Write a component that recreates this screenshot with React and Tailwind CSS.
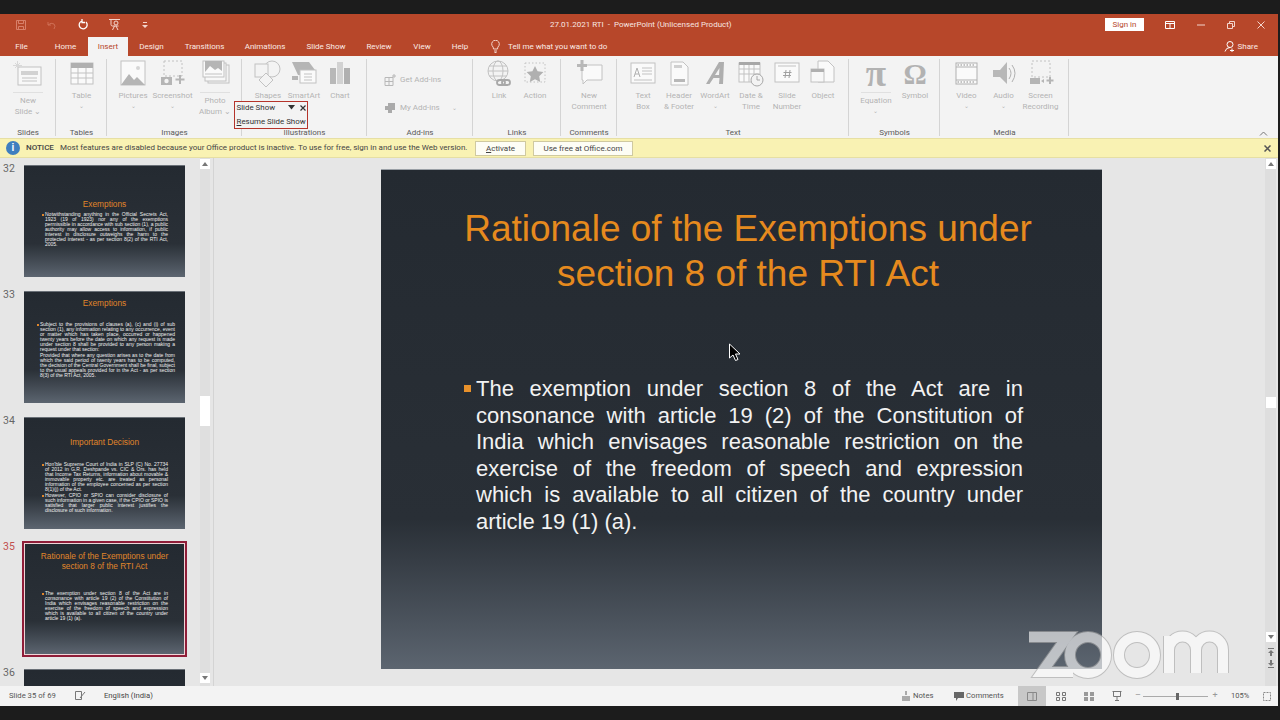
import React from "react";

const ui = { fontFamily: 'Roboto, "Noto Sans", sans-serif' };
const arial = { fontFamily: '"Liberation Sans", Arial, sans-serif' };
const serif = { fontFamily: '"Liberation Serif", serif' };

// generic ribbon icon wrapper
function Ico({ w = 30, h = 28, children }) {
  return (
    <svg width={w} height={h} viewBox={`0 0 ${w} ${h}`} fill="none" stroke="#c2c2c2" strokeWidth="1">
      {children}
    </svg>
  );
}

const icons = {
  newSlide: (
    <Ico w={32}>
      <rect x="6" y="7" width="23" height="18" fill="#f8f8f8" />
      <rect x="9" y="11" width="17" height="4" fill="#d2d2d2" stroke="none" />
      <path d="M10 18h15M10 21h15" />
      <path d="M3 3l5 5M8 3L3 8M5.500 1v9M1 5.500h9" stroke="#d8d8d8" />
    </Ico>
  ),
  table: (
    <Ico>
      <rect x="4" y="3" width="22" height="21" fill="#fafafa" />
      <rect x="4" y="3" width="22" height="5" fill="#b0b0b0" stroke="none" />
      <path d="M4 13h22M4 18h22M11 8v16M19 8v16" />
    </Ico>
  ),
  pictures: (
    <Ico>
      <rect x="3" y="1" width="24" height="24" fill="#fafafa" />
      <path d="M3 25l8-11 5 6 3-3 8 8z" fill="#b5b5b5" stroke="none" />
      <circle cx="20" cy="8" r="2" fill="#d5d5d5" stroke="none" />
    </Ico>
  ),
  screenshot: (
    <Ico>
      <rect x="6" y="1" width="18" height="15" strokeDasharray="2 2" />
      <rect x="3" y="17" width="11" height="8" fill="#b5b5b5" stroke="none" />
      <circle cx="8.500" cy="21" r="2.200" fill="#f3f3f3" stroke="none" />
      <path d="M22 15v9M17.500 19.500h9" stroke="#b5b5b5" strokeWidth="2" />
    </Ico>
  ),
  album: (
    <Ico>
      <rect x="8" y="5" width="21" height="18" fill="#f3f3f3" />
      <rect x="5" y="3" width="21" height="18" fill="#f8f8f8" />
      <rect x="3" y="1" width="21" height="16" fill="#fafafa" />
      <path d="M5 12l5-6 5 4 3-2 4 3v-10H5z" fill="#b5b5b5" stroke="none" />
      <path d="M5 14h17" />
    </Ico>
  ),
  shapes: (
    <Ico w={28}>
      <circle cx="18" cy="9" r="8" />
      <rect x="1" y="4" width="13" height="13" fill="#f3f3f3" />
      <path d="M12 13l7 7-7 7-7-7z" fill="#f3f3f3" />
    </Ico>
  ),
  smartArt: (
    <Ico>
      <path d="M3 2h17l6 8H16l-3 5H9z" fill="#b5b5b5" stroke="none" />
      <rect x="11" y="10" width="16" height="13" fill="#fafafa" />
      <path d="M15 14h8M15 17h8M15 20h8" />
      <path d="M3 16h6v4H3z" fill="#b5b5b5" stroke="none" />
    </Ico>
  ),
  chart: (
    <Ico>
      <rect x="5" y="8" width="6" height="16" fill="#b8b8b8" stroke="none" />
      <rect x="12" y="2" width="6" height="22" fill="#d2d2d2" stroke="none" />
      <rect x="19" y="8" width="6" height="16" fill="#b0b0b0" stroke="none" />
    </Ico>
  ),
  link: (
    <Ico>
      <circle cx="14" cy="11" r="10" />
      <ellipse cx="14" cy="11" rx="5" ry="10" />
      <path d="M4 11h20M5 6h18M5 16h18" />
      <rect x="13" y="20" width="8" height="5" rx="2.500" stroke="#a8a8a8" strokeWidth="1.800" />
      <rect x="18" y="20" width="8" height="5" rx="2.500" stroke="#a8a8a8" strokeWidth="1.800" />
    </Ico>
  ),
  action: (
    <Ico>
      <rect x="5" y="3" width="20" height="19" strokeDasharray="1.500 2" />
      <path d="M15 6l2.600 5.300 5.800.8-4.200 4.100 1 5.800-5.200-2.700-5.200 2.700 1-5.800-4.200-4.100 5.800-.8z" fill="#b0b0b0" stroke="none" />
    </Ico>
  ),
  comment: (
    <Ico>
      <path d="M8 5h20v15H13l-4 4v-4H8z" fill="#fafafa" />
      <path d="M8 0v11M3 5.500h10" stroke="#b8b8b8" strokeWidth="3" />
    </Ico>
  ),
  textBox: (
    <Ico>
      <rect x="3" y="3" width="24" height="20" fill="#fafafa" />
      <path d="M6 17l3-9 3 9M7 14h4" stroke="#b0b0b0" />
      <path d="M14 8h10M14 11h10M14 14h10M6 20h18" />
    </Ico>
  ),
  header: (
    <Ico>
      <path d="M7 2h12l5 5v18H7z" fill="#fafafa" />
      <rect x="10" y="5" width="8" height="3" fill="#d0d0d0" stroke="none" />
      <rect x="10" y="19" width="11" height="3" fill="#b8b8b8" stroke="none" />
    </Ico>
  ),
  wordArt: (
    <Ico>
      <path d="M6 24L19 2h5l-1 22h-4l.5-6h-6l-4 6zM15 15h4l.5-7z" fill="#aeaeae" stroke="none" />
    </Ico>
  ),
  date: (
    <Ico>
      <rect x="3" y="3" width="21" height="19" fill="#fafafa" />
      <rect x="3" y="2" width="21" height="3" fill="#a8a8a8" stroke="none" />
      <path d="M3 9h21M3 14h21M8 5v17M13 5v17M18 5v17" />
      <circle cx="21" cy="20" r="6" fill="#f3f3f3" stroke="#a8a8a8" />
      <path d="M21 16v4h3" stroke="#a8a8a8" />
    </Ico>
  ),
  number: (
    <Ico>
      <rect x="3" y="3" width="24" height="19" fill="#fafafa" />
      <path d="M6 6h18" />
      <path d="M13 18l1-8M17 18l1-8M11.500 12.500h8M11 15.500h8" stroke="#a0a0a0" />
    </Ico>
  ),
  object: (
    <Ico>
      <path d="M10 1h10l6 6v15H10z" fill="#fafafa" />
      <rect x="3" y="9" width="13" height="13" fill="#f8f8f8" />
      <rect x="3" y="9" width="13" height="3" fill="#b0b0b0" stroke="none" />
    </Ico>
  ),
  video: (
    <Ico>
      <rect x="4" y="3" width="21" height="21" fill="#fafafa" stroke="#b0b0b0" />
      <path d="M4 7h21M4 20h21" stroke="#b0b0b0" />
      <path d="M5.500 5h18M5.500 22h18" stroke="#b0b0b0" strokeWidth="1.500" strokeDasharray="1.500 1.500" />
    </Ico>
  ),
  audio: (
    <Ico>
      <path d="M4 10h7l7-8v22l-7-7H4z" fill="#b8b8b8" stroke="none" />
      <path d="M20 8q4 5 0 11M23 5q6 8 0 17" stroke="#b0b0b0" />
    </Ico>
  ),
  screenRec: (
    <Ico>
      <rect x="6" y="1" width="18" height="16" strokeDasharray="2 2" />
      <rect x="4" y="18" width="10" height="6" fill="#b5b5b5" stroke="none" />
      <path d="M15 21l3-2v4z" fill="#b5b5b5" stroke="none" />
      <path d="M24 17v7M20.500 20.500h7" stroke="#b5b5b5" strokeWidth="2" />
    </Ico>
  ),
  equation: (
    <span className="text-[37px] leading-[28px] font-bold text-[#b2b2b2]" style={serif}>
      π
    </span>
  ),
  symbol: (
    <span className="text-[29px] leading-[28px] font-bold text-[#b2b2b2]" style={serif}>
      Ω
    </span>
  ),
};

// w = button width, lines = label, icon key; chev adds the small drop arrow line
function RibbonBtn({ w, icon, lines, chev, split }) {
  return (
    <div className="flex flex-col items-center shrink-0" style={{ width: w }}>
      <div className="h-[28px] flex items-end justify-center">{icons[icon]}</div>
      {split && <div className="w-[30px] h-px bg-[#e0e0e0] mt-[4px] mb-[3px]" />}
      <div className={`flex flex-col items-center text-[8px] leading-[10.500px] text-[#b4b4b4] whitespace-nowrap ${split ? "" : "mt-[3px]"}`}>
        {lines.map((l) => (
          <span key={l}>{l}</span>
        ))}
        {chev && <span className="text-[6px] leading-[8px]">⌄</span>}
      </div>
    </div>
  );
}

function Group({ w, label, pl = 0, children }) {
  return (
    <div className="relative h-full shrink-0 flex flex-col" style={{ width: w }}>
      <div className="flex flex-1 pt-[4px]" style={{ paddingLeft: pl }}>
        {children}
      </div>
      <div className="h-[13px] text-center text-[8px] leading-[15px] text-[#5a5a5a]">{label}</div>
      <div className="absolute right-0 top-[3px] bottom-[2px] w-px bg-[#d4d4d4]" />
    </div>
  );
}

function Ribbon() {
  return (
    <div className="relative h-[82px] bg-[#f3f3f3] flex shrink-0">
      <Group w={56} label="Slides">
        <RibbonBtn w={56} icon="newSlide" lines={["New", "Slide ⌄"]} split />
      </Group>
      <Group w={51} label="Tables">
        <RibbonBtn w={51} icon="table" lines={["Table"]} chev />
      </Group>
      <Group w={135} label="Images" pl={7}>
        <RibbonBtn w={38} icon="pictures" lines={["Pictures"]} chev />
        <RibbonBtn w={41} icon="screenshot" lines={["Screenshot"]} chev />
        <RibbonBtn w={44} icon="album" lines={["Photo", "Album ⌄"]} split />
      </Group>
      <Group w={125} label="Illustrations" pl={8}>
        <RibbonBtn w={36} icon="shapes" lines={["Shapes"]} />
        <RibbonBtn w={36} icon="smartArt" lines={["SmartArt"]} />
        <RibbonBtn w={36} icon="chart" lines={["Chart"]} />
      </Group>
      <Group w={106} label="Add-ins">
        <div className="flex flex-col pl-[17px] pt-[13px] gap-[14px] text-[8px] leading-[14px] text-[#b4b4b4]">
          <div className="flex items-center gap-[4px]">
            <svg width="12" height="12" viewBox="0 0 12 12" fill="none" stroke="#b8b8b8">
              <path d="M1 3.500h8v8H1zM1 7.500h8M5 3.500v8M10 0v4M8 2h4" />
            </svg>
            <span>Get Add-ins</span>
          </div>
          <div className="flex items-center gap-[4px]">
            <svg width="12" height="12" viewBox="0 0 12 12" fill="#aaaaaa">
              <path d="M4 1h7v7H8v3H4V8H1V4h3z" />
            </svg>
            <span>My Add-ins</span>
            <span className="ml-[8px] text-[6px]">⌄</span>
          </div>
        </div>
      </Group>
      <Group w={88} label="Links" pl={8}>
        <RibbonBtn w={36} icon="link" lines={["Link"]} />
        <RibbonBtn w={36} icon="action" lines={["Action"]} />
      </Group>
      <Group w={56} label="Comments">
        <RibbonBtn w={56} icon="comment" lines={["New", "Comment"]} />
      </Group>
      <Group w={232} label="Text" pl={8}>
        <RibbonBtn w={36} icon="textBox" lines={["Text", "Box"]} />
        <RibbonBtn w={36} icon="header" lines={["Header", "& Footer"]} />
        <RibbonBtn w={36} icon="wordArt" lines={["WordArt"]} chev />
        <RibbonBtn w={36} icon="date" lines={["Date &", "Time"]} />
        <RibbonBtn w={36} icon="number" lines={["Slide", "Number"]} />
        <RibbonBtn w={36} icon="object" lines={["Object"]} />
      </Group>
      <Group w={91} label="Symbols" pl={8}>
        <RibbonBtn w={38} icon="equation" lines={["Equation"]} split chev />
        <RibbonBtn w={40} icon="symbol" lines={["Symbol"]} />
      </Group>
      <Group w={129} label="Media" pl={8}>
        <RibbonBtn w={37} icon="video" lines={["Video"]} chev />
        <RibbonBtn w={37} icon="audio" lines={["Audio"]} chev />
        <RibbonBtn w={37} icon="screenRec" lines={["Screen", "Recording"]} />
      </Group>
      <svg className="absolute left-[1259px] top-[75px]" width="9" height="5" viewBox="0 0 9 5" fill="none" stroke="#777">
        <path d="M1 4.500l3.500-3.500 3.500 3.500" />
      </svg>

      {/* floating slide show toolbar */}
      <div className="absolute left-[234px] top-[45px] w-[74px] h-[28px] border-[1.500px] border-[#b5342b] bg-[#f3f3f3] text-[7.900px] text-[#333] pl-[1.500px] whitespace-nowrap">
        <div className="flex items-center h-[11px] leading-[11px]">
          <span className="w-[51px] shrink-0">Slide Show</span>
          <svg className="shrink-0" width="7" height="5" viewBox="0 0 7 5" fill="#333">
            <path d="M0 0h7L3.500 4.500z" />
          </svg>
          <svg className="ml-[5px] shrink-0" width="6" height="6" viewBox="0 0 6 6" fill="none" stroke="#333" strokeWidth="1.200">
            <path d="M.5.500l5 5M5.500.500l-5 5" />
          </svg>
        </div>
        <div className="mt-[2px] leading-[13px]">
          <span className="underline">R</span>esume Slide Show
        </div>
      </div>
    </div>
  );
}

function TitleBar() {
  return (
    <div className="h-[21px] mb-[2px] flex items-center relative text-white shrink-0">
      <div className="flex items-center pl-[15px] gap-[19px] w-[550px] shrink-0">
        <svg width="12" height="12" viewBox="0 0 12 12" fill="none" stroke="#d8806a">
          <path d="M1.500 1.500h9v9h-9zM3.500 1.500v3h5v-3M3.500 10.500v-3h5v3" />
        </svg>
        <svg width="12" height="12" viewBox="0 0 12 12" fill="none" stroke="#cf6f55">
          <path d="M2 3v3h3M2 6q3-3 6-1 2 2 0 5" />
        </svg>
        <svg width="12" height="12" viewBox="0 0 12 12" fill="none" stroke="#fff" strokeWidth="1.300">
          <path d="M9 3a4 4 0 1 1-4-1M5 0v3.500h3" />
        </svg>
        <svg width="13" height="13" viewBox="0 0 13 13" fill="none" stroke="#f3d5cc">
          <path d="M1 1.500h11M3 1.500v5q0 1.500 1.500 1.500h6M6.500 8l-2 4M8 8l2 4" />
          <circle cx="8" cy="5" r="2" />
        </svg>
        <svg className="ml-[2px]" width="6" height="8" viewBox="0 0 6 8" fill="#f3d5cc">
          <path d="M1 1h4v1H1zM0 4h6L3 7z" />
        </svg>
      </div>
      <div className="text-[8px] text-[#f8e6e0] whitespace-nowrap w-[555px] shrink-0">27.01.2021 RTI&nbsp; - &nbsp;PowerPoint (Unlicensed Product)</div>
      <div className="w-[39px] h-[13px] bg-white text-[#b7472a] text-[8px] leading-[13px] text-center shrink-0">Sign in</div>
      <svg className="ml-[21px]" width="10" height="8" viewBox="0 0 10 8" fill="none" stroke="#fff">
        <path d="M.5.500h9v7h-9zM.5 2.500h9M5 2.500v5" />
      </svg>
      <svg className="ml-[22px]" width="8" height="2" viewBox="0 0 8 2" fill="none" stroke="#f3d5cc">
        <path d="M0 1h8" />
      </svg>
      <svg className="ml-[22px]" width="8" height="8" viewBox="0 0 8 8" fill="none" stroke="#f3d5cc">
        <path d="M.5 2.500h5v5h-5zM2.500 2.500v-2h5v5h-2" />
      </svg>
      <svg className="ml-[22px]" width="8" height="8" viewBox="0 0 8 8" fill="none" stroke="#f3d5cc">
        <path d="M.5.500l7 7M7.500.500l-7 7" />
      </svg>
    </div>
  );
}

const tabs = [
  ["File", 43],
  ["Home", 45],
  ["Insert", 40],
  ["Design", 47],
  ["Transitions", 59],
  ["Animations", 62],
  ["Slide Show", 60],
  ["Review", 46],
  ["View", 40],
  ["Help", 36],
];

function TabRow() {
  return (
    <div className="h-[19px] flex items-end text-[8px] text-[#fbeae5] shrink-0">
      {tabs.map(([t, w]) => (
        <div
          key={t}
          style={{ width: w }}
          className={`h-[19px] leading-[20px] text-center shrink-0 ${t === "Insert" ? "bg-[#f3f3f3] text-[#b7472a]" : ""}`}
        >
          {t}
        </div>
      ))}
      <div className="flex items-center h-[19px] pl-[12px] gap-[7px]">
        <svg width="11" height="13" viewBox="0 0 11 13" fill="none" stroke="#f3d5cc">
          <path d="M3.500 9q0-2-1.500-3.500a3.800 3.800 0 1 1 7 0Q7.500 7 7.500 9zM4 11h3M4.500 12.500h2" />
        </svg>
        <span>Tell me what you want to do</span>
      </div>
      <div className="ml-auto flex items-center h-[19px] pr-[20px] gap-[3px]">
        <svg width="11" height="11" viewBox="0 0 11 11" fill="none" stroke="#fff">
          <circle cx="6" cy="3.500" r="3" />
          <path d="M1 10.500q1-4 5-4M6 9.500h4M8 7.500v4" />
        </svg>
        <span>Share</span>
      </div>
    </div>
  );
}

function Notice() {
  return (
    <div className="h-[20px] bg-[#f9f2b3] border-y border-[#e6dfa4] flex items-center text-[8px] text-[#444] relative shrink-0">
      <div className="ml-[6px] w-[14px] h-[14px] rounded-full bg-[#3f7fbf] text-white text-[10px] leading-[14px] text-center font-bold shrink-0" style={arial}>
        i
      </div>
      <span className="ml-[6px] w-[34px] font-medium shrink-0">NOTICE</span>
      <span className="whitespace-nowrap w-[415px] shrink-0">Most features are disabled because your Office product is inactive. To use for free, sign in and use the Web version.</span>
      <div className="w-[51px] h-[15px] bg-[#fdfdf5] border border-[#cfc9a0] text-center leading-[13px] shrink-0">
        <span className="underline">A</span>ctivate
      </div>
      <div className="ml-[7px] w-[100px] h-[15px] bg-[#fdfdf5] border border-[#cfc9a0] text-center leading-[13px] shrink-0">Use free at Office.com</div>
      <svg className="absolute left-[1264px] top-[6px]" width="7" height="7" viewBox="0 0 7 7" fill="none" stroke="#555" strokeWidth="1.500">
        <path d="M.5.500l6 6M6.500.500l-6 6" />
      </svg>
    </div>
  );
}

function ScrollArrow({ up, className = "" }) {
  return (
    <div className={`w-[10px] h-[10px] bg-white flex items-center justify-center shrink-0 ${className}`}>
      <svg width="6" height="4" viewBox="0 0 6 4" fill="#777">
        <path d={up ? "M3 0l3 4H0z" : "M0 0h6L3 4z"} />
      </svg>
    </div>
  );
}

const thumbs = [
  {
    n: 32,
    title: ["Exemptions"],
    titleTop: 33,
    bodyTop: 3,
    paras: [
      "Notwithstanding anything in the Official Secrets Act, 1923 (19 of 1923) nor any of the exemptions permissible in accordance with sub section (1), a public authority may allow access to information, if public interest in disclosure outweighs the harm to the protected interest - as per section 8(2) of the RTI Act, 2005.",
    ],
    ml: 18,
    w: 126,
  },
  {
    n: 33,
    title: ["Exemptions"],
    titleTop: 6,
    bodyTop: 14,
    paras: [
      "Subject to the provisions of clauses (a), (c) and (i) of sub section (1), any information relating to any occurrence, event or matter which has taken place, occurred or happened twenty years before the date on which any request is made under section 8 shall be provided to any person making a request under that section:",
      "Provided that where any question arises as to the date from which the said period of twenty years has to be computed, the decision of the Central Government shall be final, subject to the usual appeals provided for in the Act - as per section 8(3) of the RTI Act, 2005.",
    ],
    ml: 13,
    w: 138,
  },
  {
    n: 34,
    title: ["Important Decision"],
    titleTop: 19,
    bodyTop: 15,
    paras: [
      "Hon'ble Supreme Court of India in SLP (C) No. 27734 of 2012 in G.R. Deshpande vs. CIC & Ors. has held that Income Tax Returns, information about movable & immovable property etc. are treated as personal information of the employee concerned as per section 8(1)(j) of the Act.",
      "However, CPIO or SPIO can consider disclosure of such information in a given case, if the CPIO or SPIO is satisfied that larger public interest justifies the disclosure of such information.",
    ],
    ml: 18,
    w: 126,
  },
  {
    n: 35,
    active: true,
    title: ["Rationale of the Exemptions under", "section 8 of the RTI Act"],
    titleTop: 7,
    bodyTop: 20,
    paras: [
      "The exemption under section 8 of the Act are in consonance with article 19 (2) of the Constitution of India which envisages reasonable restriction on the exercise of the freedom of speech and expression which is available to all citizen of the country under article 19 (1) (a).",
    ],
    ml: 17,
    w: 126,
  },
  { n: 36, title: [], paras: [] },
];

function Thumb({ t }) {
  return (
    <div className="flex h-[112px] shrink-0">
      <div className={`w-[24px] pl-[3px] text-[10.500px] leading-[12px] -mt-[2px] ${t.active ? "text-[#c2504d]" : "text-[#666]"}`}>{t.n}</div>
      <div
        style={arial}
        className={`w-[161px] h-[112px] bg-gradient-to-b from-[#242a31] via-[#2a3037] via-70% to-[#5c6570] overflow-hidden shrink-0 ${
          t.active ? "border border-[#efd4d6] ring-2 ring-[#8f1d38]" : "border-t border-[#6a7077]"
        }`}
      >
        <div className="text-center text-[#e0862a] text-[8.300px] leading-[10px] whitespace-nowrap" style={{ paddingTop: t.titleTop }}>
          {t.title.map((l) => (
            <div key={l}>{l}</div>
          ))}
        </div>
        <div className="flex flex-col gap-[1px]" style={{ marginTop: t.bodyTop, marginLeft: t.ml, width: t.w }}>
          {t.paras.map((p, i) => (
            <div key={p} className="flex gap-[1px]">
              <div className={`w-[2px] h-[2px] mt-[1.500px] shrink-0 ${t.n === 33 && i === 1 ? "" : "bg-[#e0862a]"}`} />
              <p className="flex-1 text-[5px] leading-[5px] text-[#f0f0f0] text-justify">{p}</p>
            </div>
          ))}
        </div>
      </div>
    </div>
  );
}

function ThumbPanel() {
  return (
    <div className="w-[214px] shrink-0 flex border-r border-[#d4d4d4] bg-[#e6e6e6]">
      <div className="w-[200px] overflow-hidden pt-[7px] flex flex-col gap-[14px] shrink-0">
        {thumbs.map((t) => (
          <Thumb key={t.n} t={t} />
        ))}
      </div>
      <div className="w-[10px] bg-[#dfdfdf] flex flex-col items-center pt-[1px] pb-[3px]">
        <ScrollArrow up />
        <div className="w-[10px] h-[30px] bg-white mt-[227px]" />
        <ScrollArrow className="mt-auto" />
      </div>
    </div>
  );
}

function Slide() {
  return (
    <div style={arial} className="w-[721px] h-[500px] bg-gradient-to-b from-[#242a31] via-[#292f36] via-70% to-[#5c6570] shrink-0 border-t border-[#9aa0a6]">
      <h1 className="pt-[36px] pl-[13px] text-center text-[37px] leading-[45px] text-[#e68a1e] font-normal">
        Rationale of the Exemptions under
        <br />
        section 8 of the RTI Act
      </h1>
      <div className="flex mt-[80px] ml-[83px] gap-[5px]">
        <div className="w-[7px] h-[7px] bg-[#e8912b] mt-[9px] shrink-0" />
        <p className="w-[547px] text-[22px] leading-[26.600px] text-[#f2f2f2] text-justify">
          The exemption under section 8 of the Act are in consonance with article 19 (2) of the Constitution of India which envisages reasonable
          restriction on the exercise of the freedom of speech and expression which is available to all citizen of the country under article 19 (1) (a).
        </p>
      </div>
    </div>
  );
}

function Canvas() {
  return (
    <div className="flex-1 bg-[#e6e6e6] flex relative">
      <div className="flex-1 pl-[167px] pt-[11px]">
        <Slide />
      </div>
      <div className="w-[11px] bg-[#dedede] flex flex-col items-center pt-[1px] pb-[18px] mr-[2px]">
        <ScrollArrow up />
        <div className="w-[10px] h-[11px] bg-white mt-[228px]" />
        <ScrollArrow className="mt-auto" />
        <svg className="mt-[6px]" width="8" height="8" viewBox="0 0 8 8" fill="#777">
          <path d="M1 0h6v1H1zM4 2l3 3H5v3H3V5H1z" />
        </svg>
        <svg className="mt-[4px]" width="8" height="8" viewBox="0 0 8 8" fill="#777">
          <path d="M1 7h6v1H1zM4 6L1 3h2V0h2v3h2z" />
        </svg>
      </div>
    </div>
  );
}

function StatusBar() {
  return (
    <div className="h-[20px] bg-[#f3f3f3] flex items-center text-[7.700px] text-[#555] shrink-0">
      <span className="ml-[9px] w-[66px] shrink-0">Slide 35 of 69</span>
      <svg className="shrink-0" width="11" height="10" viewBox="0 0 11 10" fill="none" stroke="#777">
        <path d="M.5.500h6v8h-6zM5 7l5-6" />
      </svg>
      <span className="ml-[18px] w-[50px] shrink-0 text-[#444] whitespace-nowrap">English (India)</span>
      <svg className="ml-[748px] shrink-0" width="8" height="10" viewBox="0 0 8 10" fill="#aaa">
        <path d="M0 5h8v5H0zM3 0h2v4H3z" />
      </svg>
      <span className="ml-[3px] w-[41px] shrink-0">Notes</span>
      <svg className="shrink-0" width="10" height="9" viewBox="0 0 10 9" fill="#666">
        <path d="M0 0h10v6H4L2 9V6H0z" />
      </svg>
      <span className="ml-[2px] w-[52px] shrink-0">Comments</span>
      <div className="w-[28px] h-[20px] bg-[#c8c8c8] flex items-center justify-center shrink-0">
        <svg width="10" height="9" viewBox="0 0 10 9" fill="none" stroke="#888">
          <path d="M.5.500h9v8h-9zM6 .5v8" />
        </svg>
      </div>
      <svg className="ml-[10px] shrink-0" width="10" height="9" viewBox="0 0 10 9" fill="none" stroke="#777">
        <path d="M.5.500h3v3h-3zM6.500.500h3v3h-3zM.5 5.500h3v3h-3zM6.500 5.500h3v3h-3z" />
      </svg>
      <svg className="ml-[18px] shrink-0" width="10" height="9" viewBox="0 0 10 9" fill="#999">
        <path d="M0 0h4v4H0zM6 0h4v4H6zM0 5h4v4H0zM6 5h4v4H6z" />
      </svg>
      <svg className="ml-[18px] shrink-0" width="10" height="10" viewBox="0 0 10 10" fill="none" stroke="#777">
        <path d="M.5.500h9M1.500.500v5h7v-5M5 5.500V9M3 9.500h4" />
      </svg>
      <span className="ml-[11px] w-[10px] text-center text-[9px] text-[#999] shrink-0">–</span>
      <div className="w-[65px] h-px bg-[#aaa] relative shrink-0">
        <div className="absolute left-[33px] -top-[3px] w-[3px] h-[7px] bg-[#666]" />
      </div>
      <span className="w-[14px] text-center text-[9px] text-[#999] shrink-0">+</span>
      <span className="ml-[9px] w-[17px] text-[7.500px] shrink-0">105%</span>
      <svg className="ml-[15px] shrink-0" width="8" height="9" viewBox="0 0 8 9" fill="none" stroke="#888">
        <path d="M.5.500h7v8h-7z" strokeDasharray="2 1" />
      </svg>
    </div>
  );
}

function ZoomLogo() {
  const shapes = (
    <>
      <path d="M1029 637h38l-25 35h31" />
      <circle cx="1088" cy="655" r="18" />
      <circle cx="1137" cy="655" r="18" />
      <path d="M1169 673v-37M1169 650a13.500 13.500 0 0 1 27 0v23M1196 650a13.500 13.500 0 0 1 27 0v23" />
    </>
  );
  return (
    <svg className="absolute left-0 top-0 pointer-events-none" width="1280" height="720" viewBox="0 0 1280 720" fill="none" opacity="0.62">
      <g stroke="#a8a8a8" strokeWidth="12">{shapes}</g>
      <g stroke="#ffffff" strokeWidth="10">{shapes}</g>
    </svg>
  );
}

export default function App() {
  return (
    <div style={ui} className="relative w-[1280px] h-[720px] bg-[#1c1c1c] overflow-hidden flex flex-col pt-[14px] pb-[14px] pr-[2px]">
      <div className="bg-[#b7472a] h-[42px] shrink-0 flex flex-col">
        <TitleBar />
        <TabRow />
      </div>
      <Ribbon />
      <Notice />
      <div className="flex flex-1 min-h-0">
        <ThumbPanel />
        <Canvas />
      </div>
      <StatusBar />
      <ZoomLogo />
      <svg className="absolute left-[728px] top-[343px]" width="13" height="19" viewBox="0 0 13 19" fill="#000" stroke="#fff" strokeWidth="1">
        <path d="M1.500 1v14l3.500-3 2.500 5.500 2.500-1-2.500-5.500h4.500z" />
      </svg>
    </div>
  );
}
